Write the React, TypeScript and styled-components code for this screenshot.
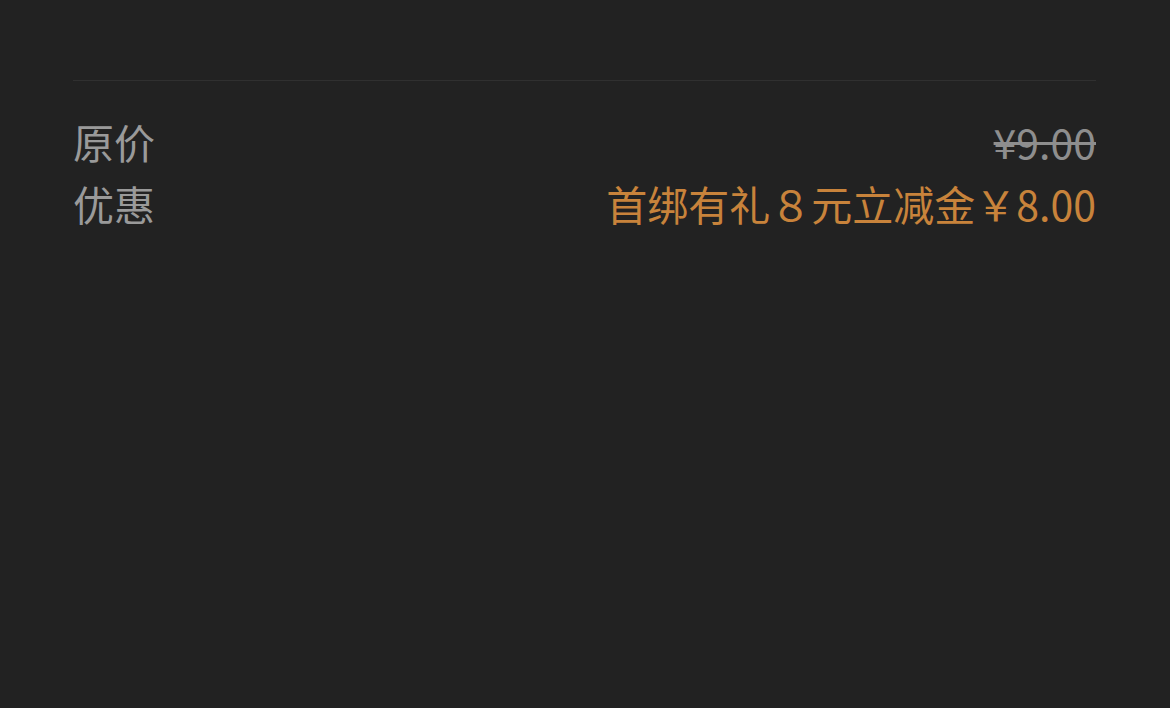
import styled, { createGlobalStyle } from "styled-components";

const GlobalStyle = createGlobalStyle`
  html, body {
    margin: 0;
    padding: 0;
    background: #222222;
  }
  body {
    font-family: "Noto Sans CJK SC", "Noto Sans", sans-serif;
  }
`;

const StyledPage = styled.div`
  width: 1170px;
  height: 708px;
  background: #222222;
  padding: 80px 74px 0 73px;
  box-sizing: border-box;
`;

const StyledDivider = styled.div`
  width: 100%;
  height: 1px;
  background: #303030;
`;

const StyledList = styled.div`
  display: flex;
  flex-direction: column;
  padding-top: 30px;
  gap: 2px;
`;

const StyledRow = styled.div`
  display: flex;
  justify-content: space-between;
  align-items: center;
  height: 60px;
`;

const StyledLabel = styled.span`
  color: #9a9a9a;
  font-size: 41px;
  line-height: 60px;
`;

const StyledValue = styled.span<{ $discount?: boolean }>`
  color: ${({ $discount }) => ($discount ? "#c8833b" : "#8e8e8e")};
  font-size: 41px;
  line-height: 60px;
  text-decoration: ${({ $discount }) => ($discount ? "none" : "line-through")};
  text-decoration-thickness: 3px;
`;

const App = () => {
  return (
    <>
      <GlobalStyle />
      <StyledPage>
        <StyledDivider />
        <StyledList>
          <StyledRow>
            <StyledLabel>原价</StyledLabel>
            <StyledValue>¥9.00</StyledValue>
          </StyledRow>
          <StyledRow>
            <StyledLabel>优惠</StyledLabel>
            <StyledValue $discount>首绑有礼８元立减金￥8.00</StyledValue>
          </StyledRow>
        </StyledList>
      </StyledPage>
    </>
  );
};

export default App;
